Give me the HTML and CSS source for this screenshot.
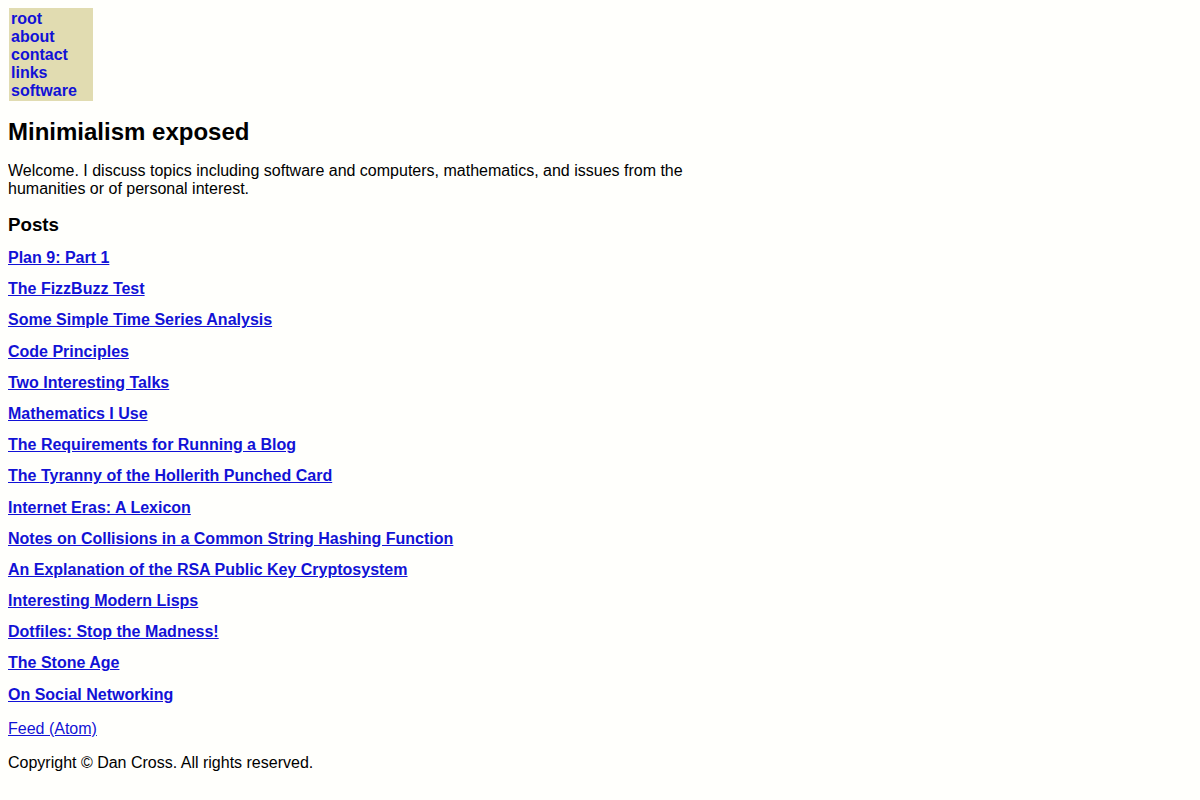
FILE: index.html
```html
<!DOCTYPE html>
<html lang="en">
<head>
<meta charset="utf-8">
<title>Minimialism exposed</title>
<link rel="stylesheet" href="styles.css">
</head>
<body>
<nav class="menu">
  <a href="#">root</a>
  <a href="#">about</a>
  <a href="#">contact</a>
  <a href="#">links</a>
  <a href="#">software</a>
</nav>
<main class="content">
  <h1 class="title">Minimialism exposed</h1>
  <p class="intro">Welcome. I discuss topics including software and computers, mathematics, and issues from the humanities or of personal interest.</p>
  <h3 class="section">Posts</h3>
  <ul class="posts">
    <li><a href="#">Plan 9: Part 1</a></li>
    <li><a href="#">The FizzBuzz Test</a></li>
    <li><a href="#">Some Simple Time Series Analysis</a></li>
    <li><a href="#">Code Principles</a></li>
    <li><a href="#">Two Interesting Talks</a></li>
    <li><a href="#">Mathematics I Use</a></li>
    <li><a href="#">The Requirements for Running a Blog</a></li>
    <li><a href="#">The Tyranny of the Hollerith Punched Card</a></li>
    <li><a href="#">Internet Eras: A Lexicon</a></li>
    <li><a href="#">Notes on Collisions in a Common String Hashing Function</a></li>
    <li><a href="#">An Explanation of the RSA Public Key Cryptosystem</a></li>
    <li><a href="#">Interesting Modern Lisps</a></li>
    <li><a href="#">Dotfiles: Stop the Madness!</a></li>
    <li><a href="#">The Stone Age</a></li>
    <li><a href="#">On Social Networking</a></li>
  </ul>
  <p class="feed"><a href="#">Feed (Atom)</a></p>
  <p class="copyright">Copyright © Dan Cross. All rights reserved.</p>
</main>
</body>
</html>
```
FILE: styles.css
```css
body {
  margin: 8px;
  background: #fffffc;
  color: #000;
  font-family: "Liberation Sans", Arial, sans-serif;
  font-size: 16px;
  line-height: 18px;
}

a {
  color: #1212d6;
}

.menu {
  display: flex;
  flex-direction: column;
  width: 80px;
  margin-left: 1px;
  padding: 2px 2px 1px 2px;
  background: #e1dcb1;
}

.menu a {
  font-weight: bold;
  text-decoration: none;
}

.title {
  font-size: 24px;
  line-height: 28px;
  margin: 17px 0 16px;
}

.intro {
  max-width: 720px;
  margin: 0 0 16px;
}

.section {
  font-size: 18.72px;
  line-height: 22px;
  margin: 0 0 13px;
}

.posts {
  list-style: none;
  margin: 0;
  padding: 0;
  display: flex;
  flex-direction: column;
  gap: 13.2px;
}

.posts a {
  font-weight: bold;
}

.feed {
  margin: 16px 0 16px;
}

.copyright {
  margin: 0;
}
```
